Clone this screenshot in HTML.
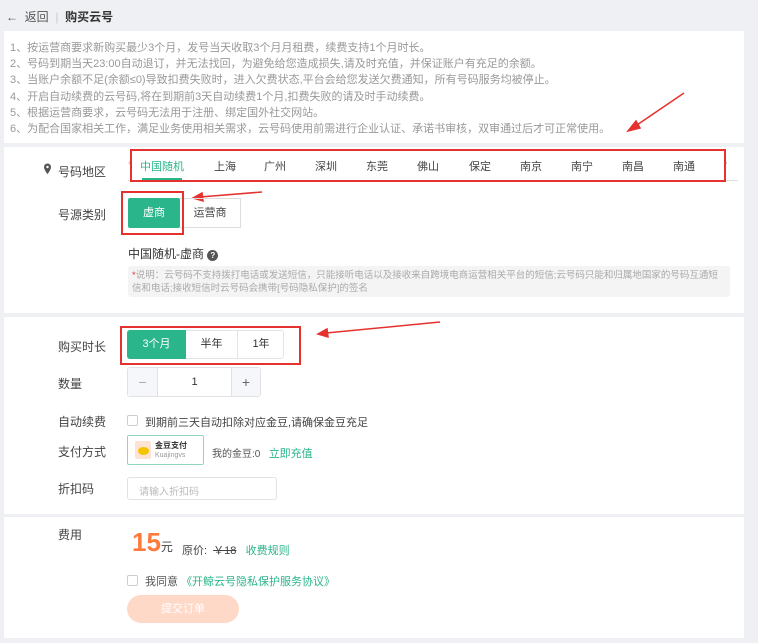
<!DOCTYPE html>
<html><head><meta charset="utf-8"><style>
*{margin:0;padding:0;box-sizing:border-box}
body{width:758px;height:643px;background:#eef0f3;font-family:"Liberation Sans","Noto Sans CJK SC",sans-serif;position:relative;overflow:hidden;color:#333}
.a{position:absolute;white-space:nowrap}
.p{position:absolute;background:#fff;left:4px;width:740px}
.l{position:absolute;left:58px;font-size:12px;color:#444}
.n{font-size:11px;color:#999;left:10px}
.t{position:absolute;top:158px;font-size:11px;color:#444;transform:translateX(-50%)}
.red{position:absolute;border:2px solid #e5322e}
</style></head><body>
<div class="a" style="left:6px;top:8px;font-size:12px;color:#555">←&nbsp; 返回 &nbsp;<span style="color:#ccc">|</span>&nbsp; <b style="color:#333">购买云号</b></div>
<div class="p" style="top:31px;height:112px"></div>
<div class="p" style="top:147px;height:166px"></div>
<div class="p" style="top:317px;height:197px"></div>
<div class="p" style="top:517px;height:121px"></div>
<div class="a n" style="top:39px">1、按运营商要求新购买最少3个月，发号当天收取3个月月租费，续费支持1个月时长。</div>
<div class="a n" style="top:55px">2、号码到期当天23:00自动退订，并无法找回，为避免给您造成损失,请及时充值，并保证账户有充足的余额。</div>
<div class="a n" style="top:71px">3、当账户余额不足(余额≤0)导致扣费失败时，进入欠费状态,平台会给您发送欠费通知，所有号码服务均被停止。</div>
<div class="a n" style="top:88px">4、开启自动续费的云号码,将在到期前3天自动续费1个月,扣费失败的请及时手动续费。</div>
<div class="a n" style="top:104px">5、根据运营商要求，云号码无法用于注册、绑定国外社交网站。</div>
<div class="a n" style="top:120px">6、为配合国家相关工作，满足业务使用相关需求，云号码使用前需进行企业认证、承诺书审核，双审通过后才可正常使用。</div>
<svg class="a" style="left:0;top:0" width="758" height="643"><g stroke="#e5322e" stroke-width="1.5" fill="#e5322e">
<line x1="684" y1="93" x2="634" y2="127"/><polygon points="628,131 636,121 640,128"/>
<line x1="262" y1="192" x2="200" y2="197"/><polygon points="193,198 202,193 203,201"/>
<line x1="440" y1="322" x2="326" y2="333"/><polygon points="318,334 327,329 328,337"/>
</g>
<path d="M44 167a3.5 3.5 0 0 1 7 0c0 3-3.5 7-3.5 7s-3.5-4-3.5-7z" fill="#555"/><circle cx="47.5" cy="167" r="1.2" fill="#fff"/></svg>
<div class="l" style="top:163px;left:58px">号码地区</div>
<div class="a" style="left:128px;top:180px;width:610px;height:1px;background:#ddd"></div>
<div class="a" style="left:128px;top:157px;font-size:11px;color:#bbb">‹</div>
<div class="a" style="left:724px;top:157px;font-size:11px;color:#bbb">›</div>
<div class="t" style="left:162px;color:#2bb58a">中国随机</div>
<div class="a" style="left:142px;top:178px;width:40px;height:2px;background:#2bb58a"></div>
<div class="t" style="left:225px">上海</div><div class="t" style="left:275px">广州</div><div class="t" style="left:326px">深圳</div><div class="t" style="left:377px">东莞</div><div class="t" style="left:428px">佛山</div><div class="t" style="left:480px">保定</div><div class="t" style="left:531px">南京</div><div class="t" style="left:582px">南宁</div><div class="t" style="left:633px">南昌</div><div class="t" style="left:684px">南通</div>
<div class="red" style="left:130px;top:149px;width:596px;height:33px"></div>
<div class="l" style="top:206px">号源类别</div>
<div class="a" style="left:128px;top:198px;width:52px;height:30px;background:#2bb58a;border-radius:2px;color:#fff;font-size:11px;text-align:center;line-height:30px">虚商</div>
<div class="a" style="left:180px;top:198px;width:61px;height:30px;border:1px solid #ddd;border-left:none;color:#444;font-size:11px;text-align:center;line-height:28px">运营商</div>
<div class="red" style="left:121px;top:191px;width:63px;height:44px"></div>
<div class="a" style="left:128px;top:245px;font-size:12px;color:#333">中国随机-虚商 <span style="display:inline-block;width:11px;height:11px;border-radius:50%;background:#555;color:#fff;font-size:8px;text-align:center;line-height:11px;font-weight:bold">?</span></div>
<div class="a" style="left:128px;top:266px;width:602px;height:31px;background:#f4f4f4;border-radius:3px;font-size:9.5px;color:#aaa;padding:3px 4px;line-height:13px;white-space:normal"><span style="color:#e5322e">*</span>说明：云号码不支持拨打电话或发送短信，只能接听电话以及接收来自跨境电商运营相关平台的短信;云号码只能和归属地国家的号码互通短信和电话;接收短信时云号码会携带[号码隐私保护]的签名</div>
<div class="l" style="top:338px">购买时长</div>
<div class="a" style="left:127px;top:330px;width:157px;height:29px;border:1px solid #e4e4e4;border-radius:3px;background:#fff"></div>
<div class="a" style="left:127px;top:330px;width:59px;height:29px;background:#2bb58a;border-radius:3px 0 0 3px;color:#fff;font-size:11px;text-align:center;line-height:29px">3个月</div>
<div class="a" style="left:186px;top:331px;width:52px;height:27px;border-right:1px solid #e4e4e4;font-size:11px;text-align:center;line-height:27px">半年</div>
<div class="a" style="left:238px;top:331px;width:46px;height:27px;font-size:11px;text-align:center;line-height:27px">1年</div>
<div class="red" style="left:120px;top:326px;width:181px;height:39px"></div>
<div class="l" style="top:375px">数量</div>
<div class="a" style="left:127px;top:367px;width:134px;height:30px;border:1px solid #e2e2e2;border-radius:3px;background:#fff"></div>
<div class="a" style="left:128px;top:368px;width:30px;height:28px;background:#f5f7fa;border-right:1px solid #e2e2e2;color:#aaa;text-align:center;line-height:28px;font-size:14px">−</div>
<div class="a" style="left:231px;top:368px;width:29px;height:28px;background:#f5f7fa;border-left:1px solid #e2e2e2;color:#666;text-align:center;line-height:28px;font-size:14px">+</div>
<div class="a" style="left:158px;top:368px;width:73px;line-height:28px;text-align:center;font-size:11px">1</div>
<div class="l" style="top:413px">自动续费</div>
<div class="a" style="left:127px;top:415px;width:11px;height:11px;border:1px solid #ccc;border-radius:2px"></div>
<div class="a" style="left:145px;top:414px;font-size:11px;color:#444">到期前三天自动扣除对应金豆,请确保金豆充足</div>
<div class="l" style="top:443px">支付方式</div>
<div class="a" style="left:127px;top:435px;width:77px;height:30px;border:1px solid #8fd8bd;border-radius:2px"></div>
<div class="a" style="left:135px;top:441px;width:16px;height:18px;background:#fde3d3;border-radius:2px"></div>
<div class="a" style="left:138px;top:447px;width:11px;height:8px;background:#f5c400;border-radius:50%"></div>
<div class="a" style="left:155px;top:440px;font-size:8px;font-weight:bold;color:#333">金豆支付</div>
<div class="a" style="left:155px;top:452px;font-size:7px;color:#999">Kuajingvs</div>
<div class="a" style="left:212px;top:445px;font-size:10px;color:#555">我的金豆:0 &nbsp; <span style="color:#2bb58a;font-size:11px">立即充值</span></div>
<div class="l" style="top:480px">折扣码</div>
<div class="a" style="left:127px;top:477px;width:150px;height:23px;border:1px solid #e2e2e2;border-radius:3px;font-size:10px;color:#bbb;padding:5px 11px">请输入折扣码</div>
<div class="l" style="top:526px">费用</div>
<div class="a" style="left:132px;top:527px;font-size:26px;font-weight:bold;color:#ff7a3d;line-height:30px">15<span style="font-size:12px;font-weight:normal;color:#444">元</span></div>
<div class="a" style="left:182px;top:542px;font-size:11px;color:#444">原价: &nbsp;<s>￥18</s> &nbsp;&nbsp;<span style="color:#2bb58a">收费规则</span></div>
<div class="a" style="left:127px;top:575px;width:11px;height:11px;border:1px solid #ccc;border-radius:2px"></div>
<div class="a" style="left:145px;top:573px;font-size:11px;color:#555">我同意 <span style="color:#2bb58a">《开鲸云号隐私保护服务协议》</span></div>
<div class="a" style="left:127px;top:595px;width:112px;height:28px;background:#fed9c8;border-radius:14px;color:#fff;font-size:11px;text-align:center;line-height:28px">提交订单</div>
</body></html>
